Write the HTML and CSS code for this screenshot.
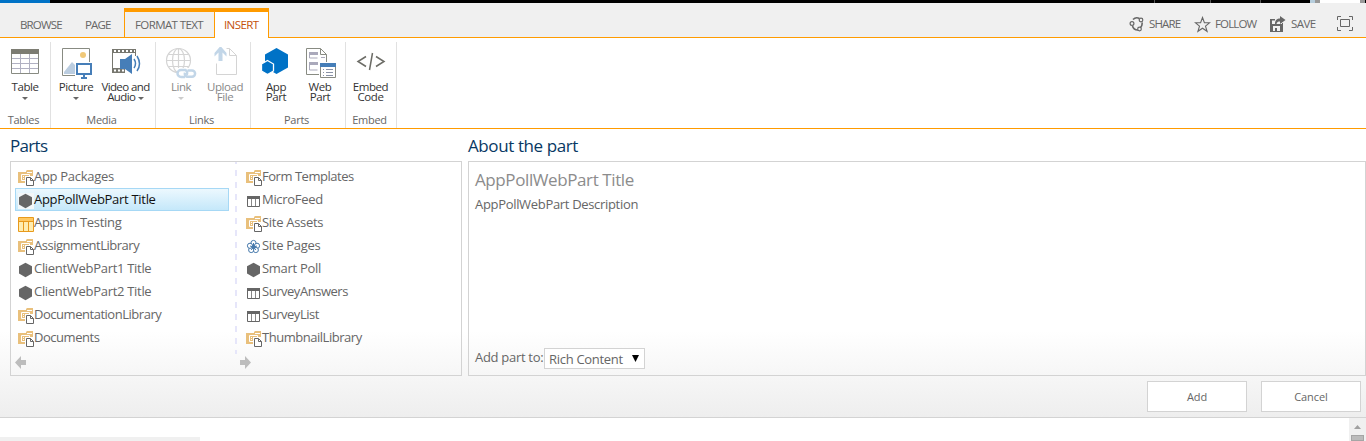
FILE: index.html
```
<!DOCTYPE html>
<html lang="en">
<head>
<meta charset="utf-8">
<title>Insert part</title>
<link rel="stylesheet" href="styles.css">
</head>
<body>
<svg class="defs" width="0" height="0" aria-hidden="true">
  <symbol id="library" viewBox="0 0 16 16">
    <path fill="#e9c07c" d="M0 2h8V1l1-1h6v13H0z"/>
    <path fill="none" stroke="#fff" d="M9 2.500h5M3.500 4.500h8v6h-8z"/>
    <path fill="none" stroke="#fff" d="M5 6.500h1m1 0h4M5 8.500h1m1 0h4"/>
    <path fill="#fff" d="M7 6h9v10H7z"/>
    <path fill="#fff" stroke="#666" d="M8.500 7.500h4l3 3v5h-7zM12.500 7.500v3h3"/>
  </symbol>
  <symbol id="hex" viewBox="0 0 16 16"><path fill="#666" d="M7.500 .7 14 4.200v7.400l-6.500 3.600L1 11.600V4.200z"/></symbol>
  <symbol id="list" viewBox="0 0 16 16"><path fill="#fff" stroke="#666" d="M1.500 3.500h12v10h-12z"/><path fill="#666" d="M1 3h13v3H1z"/><path stroke="#888" d="M5.500 6v7M9.500 6v7"/></symbol>
  <symbol id="testlist" viewBox="0 0 16 16"><path fill="#ffedb0" stroke="#e89a1c" d="M.5 1.500h15v14H.5z"/><path fill="#ffc861" d="M1 2h14v3H1z"/><path fill="none" stroke="#e89a1c" d="M1 5.500h14M5.500 5v10M10.500 5v10"/></symbol>
  <symbol id="wiki" viewBox="0 0 16 16"><g fill="#fff" stroke="#4679ac"><circle cx="7.500" cy="4" r="2.600"/><circle cx="11" cy="6.800" r="2.600"/><circle cx="9.800" cy="11" r="2.600"/><circle cx="5.200" cy="11" r="2.600"/><circle cx="4" cy="6.800" r="2.600"/></g><path stroke="#4679ac" d="M7.500 8V4M7.500 8l3.500-1M7.500 8l2.300 3M7.500 8l-2.300 3M7.500 8 4 7"/><circle cx="7.500" cy="8" r="2" fill="#4679ac"/></symbol>
</svg>

<div class="suite"><i class="suite-blue"></i><i class="suite-black"></i><i class="tick"></i><i class="suite-b"></i><i class="tick"></i><i class="suite-c"></i><i class="tick"></i><i class="suite-d"></i><i class="suite-pale"></i><i class="suite-gray"></i><i class="suite-white"></i><i class="suite-gray"></i></div>

<header class="tabs">
  <span class="tab browse">BROWSE</span><span class="tab page">PAGE</span>
  <div class="context"><span class="tab format">FORMAT TEXT</span><span class="tab insert">INSERT</span></div>
  <nav class="actions">
    <svg width="16" height="16" viewBox="0 0 16 16"><g fill="none" stroke="#666" stroke-width="1.600"><path d="M4 3.500A5.500 5.500 0 0 1 10.500 2.500M13 6.500a5.500 5.500 0 0 1-1.500 5M9 14a5.500 5.500 0 0 1-5.500-4"/></g><g fill="#f0f0f0" stroke="#666" stroke-width="1.200"><circle cx="3" cy="7.500" r="1.900"/><circle cx="12" cy="4" r="1.800"/><circle cx="10.500" cy="13" r="1.800"/></g></svg>
    <span class="share">SHARE</span>
    <svg width="17" height="17" viewBox="0 0 17 17"><path fill="none" stroke="#666" stroke-width="1.100" d="m8.500 1.500 1.900 5.200h5.300l-4.200 3.400 1.600 5.200-4.600-3.100-4.600 3.100 1.600-5.200L1.300 6.700h5.300z"/></svg>
    <span class="follow">FOLLOW</span>
    <svg width="17" height="16" viewBox="0 0 17 16"><path fill="#666" d="M1 3h5v1.500H3V8h10V7h1v9H1zM4 10v5h2v-3h2v3h3v-5zM6 8c0-4 2-5.500 5-5.500V0l5.500 4-5.500 4V5.500C9 5.500 8 6 7.500 8z"/></svg>
    <span class="save">SAVE</span>
    <svg class="focus" width="16" height="15" viewBox="0 0 16 15"><path fill="none" stroke="#666" d="M.5 4V.5H4M12 .5h3.500V4M15.500 11v3.500H12M4 14.500H.5V11M3.500 3.500h9v7h-9z"/></svg>
  </nav>
</header>

<section class="ribbon">
  <div class="group tables"><div class="tools">
    <div class="tool w-table"><svg width="32" height="32" viewBox="0 0 32 32"><path fill="#fff" stroke="#888b82" d="M2.500 2.500h27v24h-27z"/><path fill="#7d7d73" d="M2 2h28v5H2z"/><path fill="none" stroke="#b1b1c2" d="M3 11.500h26M3 16.500h26M3 21.500h26M11.500 7v19M20.500 7v19"/></svg><span>Table</span><i class="caret"></i></div>
  </div><footer>Tables</footer></div>
  <div class="group media"><div class="tools">
    <div class="tool w-picture"><svg width="32" height="32" viewBox="0 0 32 32"><path fill="#fff" stroke="#888b82" d="M2.500 1.500h27v27h-27z"/><path fill="#bbcde0" d="m4 25 8-10 5 5v7H4z"/><circle cx="23" cy="8" r="3" fill="#f0c878"/><path fill="#fff" d="M15 15h17v17H15z"/><path fill="#fff" stroke="#467eb8" stroke-width="2" d="M17 17h14v10H17z"/><path stroke="#467eb8" stroke-width="2" d="M24 27v4m-3 0h6"/></svg><span>Picture</span><i class="caret"></i></div>
    <div class="tool w-video"><svg width="32" height="32" viewBox="0 0 32 32"><path fill="#77776f" d="M2 2h24v4H2zM2 21h13v5H2z"/><path fill="none" stroke="#77776f" d="M2.500 2v24M25.500 2v7"/><path stroke="#fff" stroke-width="2" stroke-dasharray="2 2" d="M4 4h21M4 23.500h10"/><path fill="#467eb8" d="M10 12h5l7-5v20l-7-5h-5z"/><path fill="none" stroke="#467eb8" stroke-width="1.500" d="M24 12q3 4.500 0 9M27 9q5 8 0 15"/></svg><span>Video and</span><span>Audio <i class="caret"></i></span></div>
  </div><footer>Media</footer></div>
  <div class="group links"><div class="tools disabled">
    <div class="tool w-link"><svg width="32" height="32" viewBox="0 0 32 32"><g fill="none" stroke="#d4d4d4" stroke-width="1.200"><circle cx="13.500" cy="13.500" r="12"/><ellipse cx="13.500" cy="13.500" rx="6" ry="12"/><path d="M13.500 1.500v24M1.500 13.500h24M3.500 7.500h20M3.500 19.500h20"/></g><path fill="#fff" d="M12 21h20v11H12z"/><g fill="none" stroke="#c2d6e8" stroke-width="2.500"><path d="M20 30h-4a3.500 3.500 0 0 1 0-7h4.500a3.500 3.500 0 0 1 1 5"/><path d="M22.500 23.500H27a3 3 0 0 1 0 6.200h-5a3 3 0 0 1-2-4"/></g></svg><span>Link</span><i class="caret"></i></div>
    <div class="tool w-upload"><svg width="32" height="32" viewBox="0 0 32 32"><path fill="none" stroke="#d4d4d4" d="M17.500 1.500h3l7 7v19h-20v-11M20.500 1.500v7h7"/><path fill="#fff" d="M5 0h12v15H5z"/><path fill="#c2d6e8" d="m11.500 -1 6 7v3.500l-4-4V14h-4V5.500l-4 4V6z"/></svg><span>Upload</span><span>File</span></div>
  </div><footer>Links</footer></div>
  <div class="group parts"><div class="tools">
    <div class="tool w-app"><svg width="32" height="32" viewBox="0 0 32 32"><path fill="#0072c6" d="M16.500 1 28 7.500v13L16.500 27 5 20.500v-13z"/><path fill="#0072c6" stroke="#fff" stroke-width="1.300" d="m7.500 13.500 6 3.500v7l-6 3.500-6-3.500v-7z"/></svg><span>App</span><span>Part</span></div>
    <div class="tool w-web"><svg width="32" height="32" viewBox="0 0 32 32"><path fill="#fff" stroke="#888b82" d="M2.500 1.500h14l6 6v20h-20zM16.500 1.500v6h6"/><path fill="#aaa9bb" d="M5 5h9v3H5zM5 15h9v3H5z"/><path fill="none" stroke="#aaa9bb" d="M5.500 6v5h8M5.500 16v7h8M17 10.500h4"/><path fill="#fff" d="M15 15h17v17H15z"/><path fill="#fff" stroke="#888b82" d="M16.500 16.500h15v14h-15z"/><path fill="#467eb8" d="M16 16h16v4H16z"/><path stroke="#8992a7" d="M19 22.500h1m2 0h7M19 25.500h1m2 0h7M19 28.500h1m2 0h7"/></svg><span>Web</span><span>Part</span></div>
  </div><footer>Parts</footer></div>
  <div class="group embed"><div class="tools">
    <div class="tool w-embed"><svg width="32" height="32" viewBox="0 0 32 32"><path fill="none" stroke="#6c6c66" stroke-width="1.500" d="M11 9.500 3 14.500l8 5M21 9.500l8 5-8 5M17.500 6l-3 17"/></svg><span>Embed</span><span>Code</span></div>
  </div><footer>Embed</footer></div>
</section>

<main class="picker">
  <div class="columns">
    <section class="partcol"><h2 class="h-parts">Parts</h2>
      <div class="box list-box">
        <div class="lists">
          <ul>
            <li><svg><use href="#library"/></svg><span>App Packages</span></li>
            <li class="selected"><svg><use href="#hex"/></svg><span>AppPollWebPart Title</span></li>
            <li><svg><use href="#testlist"/></svg><span>Apps in Testing</span></li>
            <li><svg><use href="#library"/></svg><span class="tight">AssignmentLibrary</span></li>
            <li><svg><use href="#hex"/></svg><span>ClientWebPart1 Title</span></li>
            <li><svg><use href="#hex"/></svg><span>ClientWebPart2 Title</span></li>
            <li><svg><use href="#library"/></svg><span class="tight">DocumentationLibrary</span></li>
            <li><svg><use href="#library"/></svg><span class="tight">Documents</span></li>
          </ul>
          <i class="divider"></i>
          <ul>
            <li><svg><use href="#library"/></svg><span class="tight">Form Templates</span></li>
            <li><svg><use href="#list"/></svg><span>MicroFeed</span></li>
            <li><svg><use href="#library"/></svg><span>Site Assets</span></li>
            <li><svg><use href="#wiki"/></svg><span>Site Pages</span></li>
            <li><svg><use href="#hex"/></svg><span>Smart Poll</span></li>
            <li><svg><use href="#list"/></svg><span class="tight">SurveyAnswers</span></li>
            <li><svg><use href="#list"/></svg><span class="tight">SurveyList</span></li>
            <li><svg><use href="#library"/></svg><span class="tight">ThumbnailLibrary</span></li>
          </ul>
        </div>
        <div class="pager"><svg viewBox="0 0 12 13"><path fill="#bdbdbd" d="M0 6.500 6 0v4h5v5H6v4z"/></svg><svg viewBox="0 0 12 13"><path fill="#bdbdbd" d="M11 6.500 5 0v4H0v5h5v4z"/></svg></div>
      </div>
    </section>
    <section class="about"><h2 class="h-about">About the part</h2>
      <div class="box about-box"><h3>AppPollWebPart Title</h3><p>AppPollWebPart Description</p>
        <div class="target"><span class="addto">Add part to:</span><div class="select"><span>Rich Content</span><svg width="8" height="7"><path d="M0 0h7L3.500 7z"/></svg></div></div>
      </div>
    </section>
  </div>
  <div class="buttons"><button>Add</button><button>Cancel</button></div>
</main>
<div class="below"><i class="strip"></i><div class="scroll"><svg width="8" height="4"><path fill="#a0a0a0" d="M0 4 3.500 0 7 4z"/></svg><i class="thumb"></i></div></div>
</body>
</html>
```
FILE: styles.css
```
* { box-sizing: border-box; }
body { margin: 0; height: 441px; overflow: hidden; background: #fff; color: #666; font: 13px/16px "Open Sans", "Noto Sans", sans-serif; }
i { display: block; font-style: normal; }
svg { display: block; flex: none; }
h2, h3, p, ul { margin: 0; padding: 0; font-weight: 400; }
.defs { position: absolute; }
.suite { display: flex; height: 3px; background: #000; }
.suite-blue { width: 50px; background: #0072c6; }
.suite-black { width: 1104px; }
.tick { width: 1px; background: #555; }
.suite-b { width: 55px; }
.suite-c { width: 49px; }
.suite-d { width: 49px; }
.suite-pale { width: 5px; background: #b6cddc; }
.suite-gray { width: 5px; background: #999; }
.suite-white { width: 40px; background: #fff; }

.tabs { display: flex; height: 35px; padding-top: 5px; background: #f0f0f0; border-bottom: 1px solid #ff9b00; font-size: 11.500px; letter-spacing: -.85px; white-space: nowrap; }
.tab { padding-top: 9px; }
.browse { width: 85px; padding-left: 20px; }
.page { width: 39px; }
.context { display: flex; width: 145px; height: 30px; border: solid #ff9b00; border-width: 4px 1px 0; letter-spacing: -.6px; }
.context .tab { padding-top: 5px; }
.format { width: 89px; padding-left: 10px; }
.insert { width: 54px; padding-left: 9px; background: #fff; border-left: 1px solid #ff9b00; color: #c4500b; }
.actions { display: flex; margin-left: auto; padding: 8px 13px 0 0; }
.share { width: 45px; margin-left: 4px; }
.follow { width: 54px; margin-left: 4px; }
.save { width: 46px; margin-left: 5px; letter-spacing: -.55px; }

.ribbon { display: flex; height: 91px; padding-top: 4px; border-bottom: 1px solid #ff9b00; font-size: 11.500px; line-height: 10px; letter-spacing: -.45px; color: #333; }
.group { display: flex; flex-direction: column; justify-content: space-between; height: 86px; border-right: 1px solid #e1e1e1; }
.tables { width: 51px; }
.media { width: 105px; }
.links, .parts { width: 95px; }
.embed { width: 51px; }
.tools { display: flex; height: 66px; padding-top: 5px; }
.tool { display: flex; flex-direction: column; align-items: center; white-space: nowrap; }
.tool svg { height: 32px; margin-bottom: 3px; }
.w-table, .w-picture, .w-link, .w-app { width: 50px; }
.w-video { width: 49px; letter-spacing: -.6px; }
.w-upload, .w-web { width: 38px; }
.w-embed { width: 49px; }
.caret { width: 0; height: 0; margin-top: 5px; border: solid transparent; border-width: 3px 3px 0; border-top-color: #666; }
span .caret { display: inline-block; margin: 0 0 1px; }
.disabled { color: #888; }
.disabled .caret { border-top-color: #ccc; }
.group footer { height: 13px; text-align: center; font-size: 11px; letter-spacing: -.25px; color: #666; padding-right: 3px; }

.picker { height: 289px; padding: 8px 0 0 10px; background: linear-gradient(#fff 0, #fff 70%, #eee); border-bottom: 1px solid #d3d3d3; }
.columns { display: grid; grid-template-columns: 452px 898px; gap: 6px; }
h2 { height: 24px; font-size: 17px; line-height: 18px; color: #083863; }
.h-parts { letter-spacing: -.7px; }
.h-about { letter-spacing: -.4px; }
.box { height: 215px; border: 1px solid #d3d3d3; }
.lists { display: flex; padding-left: 4px; height: 192px; }
.lists ul { list-style: none; width: 214px; padding-top: 3px; }
li { display: flex; align-items: center; height: 23px; padding-left: 3px; white-space: nowrap; letter-spacing: -.3px; }
li span { padding-bottom: 2px; }
.tight { letter-spacing: -.47px; }
li svg { width: 16px; height: 16px; margin-top: 2px; }
li.selected { padding-left: 2px; border: 1px solid #a6d8f5; background: linear-gradient(#ecf8fe, #c5e8fa); color: #111; }
.selected svg { background: #f3f7f9; }
.divider { width: 2px; height: 192px; margin: 0 6px; background: repeating-linear-gradient(#e6e6fa 0 2px, transparent 2px 8px, #e6e6fa 8px 12px); }
.pager { display: flex; gap: 213px; padding: 2px 0 0 4px; }
.pager svg { width: 12px; height: 13px; }
.about-box { display: flex; flex-direction: column; padding: 8px 6px 6px; }
h3 { font-size: 17px; line-height: 20px; color: #8c8c8c; letter-spacing: -.4px; }
.about-box p { margin-top: 6px; letter-spacing: -.32px; }
.target { display: flex; margin-top: auto; letter-spacing: -.3px; }
.addto { width: 69px; padding-top: 1px; white-space: nowrap; }
.select { display: flex; width: 101px; height: 21px; padding: 2px 4px; border: 1px solid #d3d3d3; background: #fff; white-space: nowrap; }
.select svg { margin: 4px 0 0 auto; }
.buttons { display: flex; justify-content: flex-end; gap: 14px; padding: 5px 5px 0 0; }
button { width: 100px; height: 31px; padding: 0; border: 1px solid #d3d3d3; background: #fff; color: #666; font: 11px "Open Sans", sans-serif; letter-spacing: -.1px; }
.below { display: flex; justify-content: space-between; height: 23px; }
.strip { width: 200px; height: 4px; margin-top: 19px; background: #f0f0f0; }
.scroll { display: flex; flex-direction: column; align-items: center; width: 17px; padding-top: 7px; background: #f0f0f0; }
.thumb { width: 13px; height: 12px; margin-top: 6px; background: #bbb; border: 1px solid #a5a5a5; }
```
